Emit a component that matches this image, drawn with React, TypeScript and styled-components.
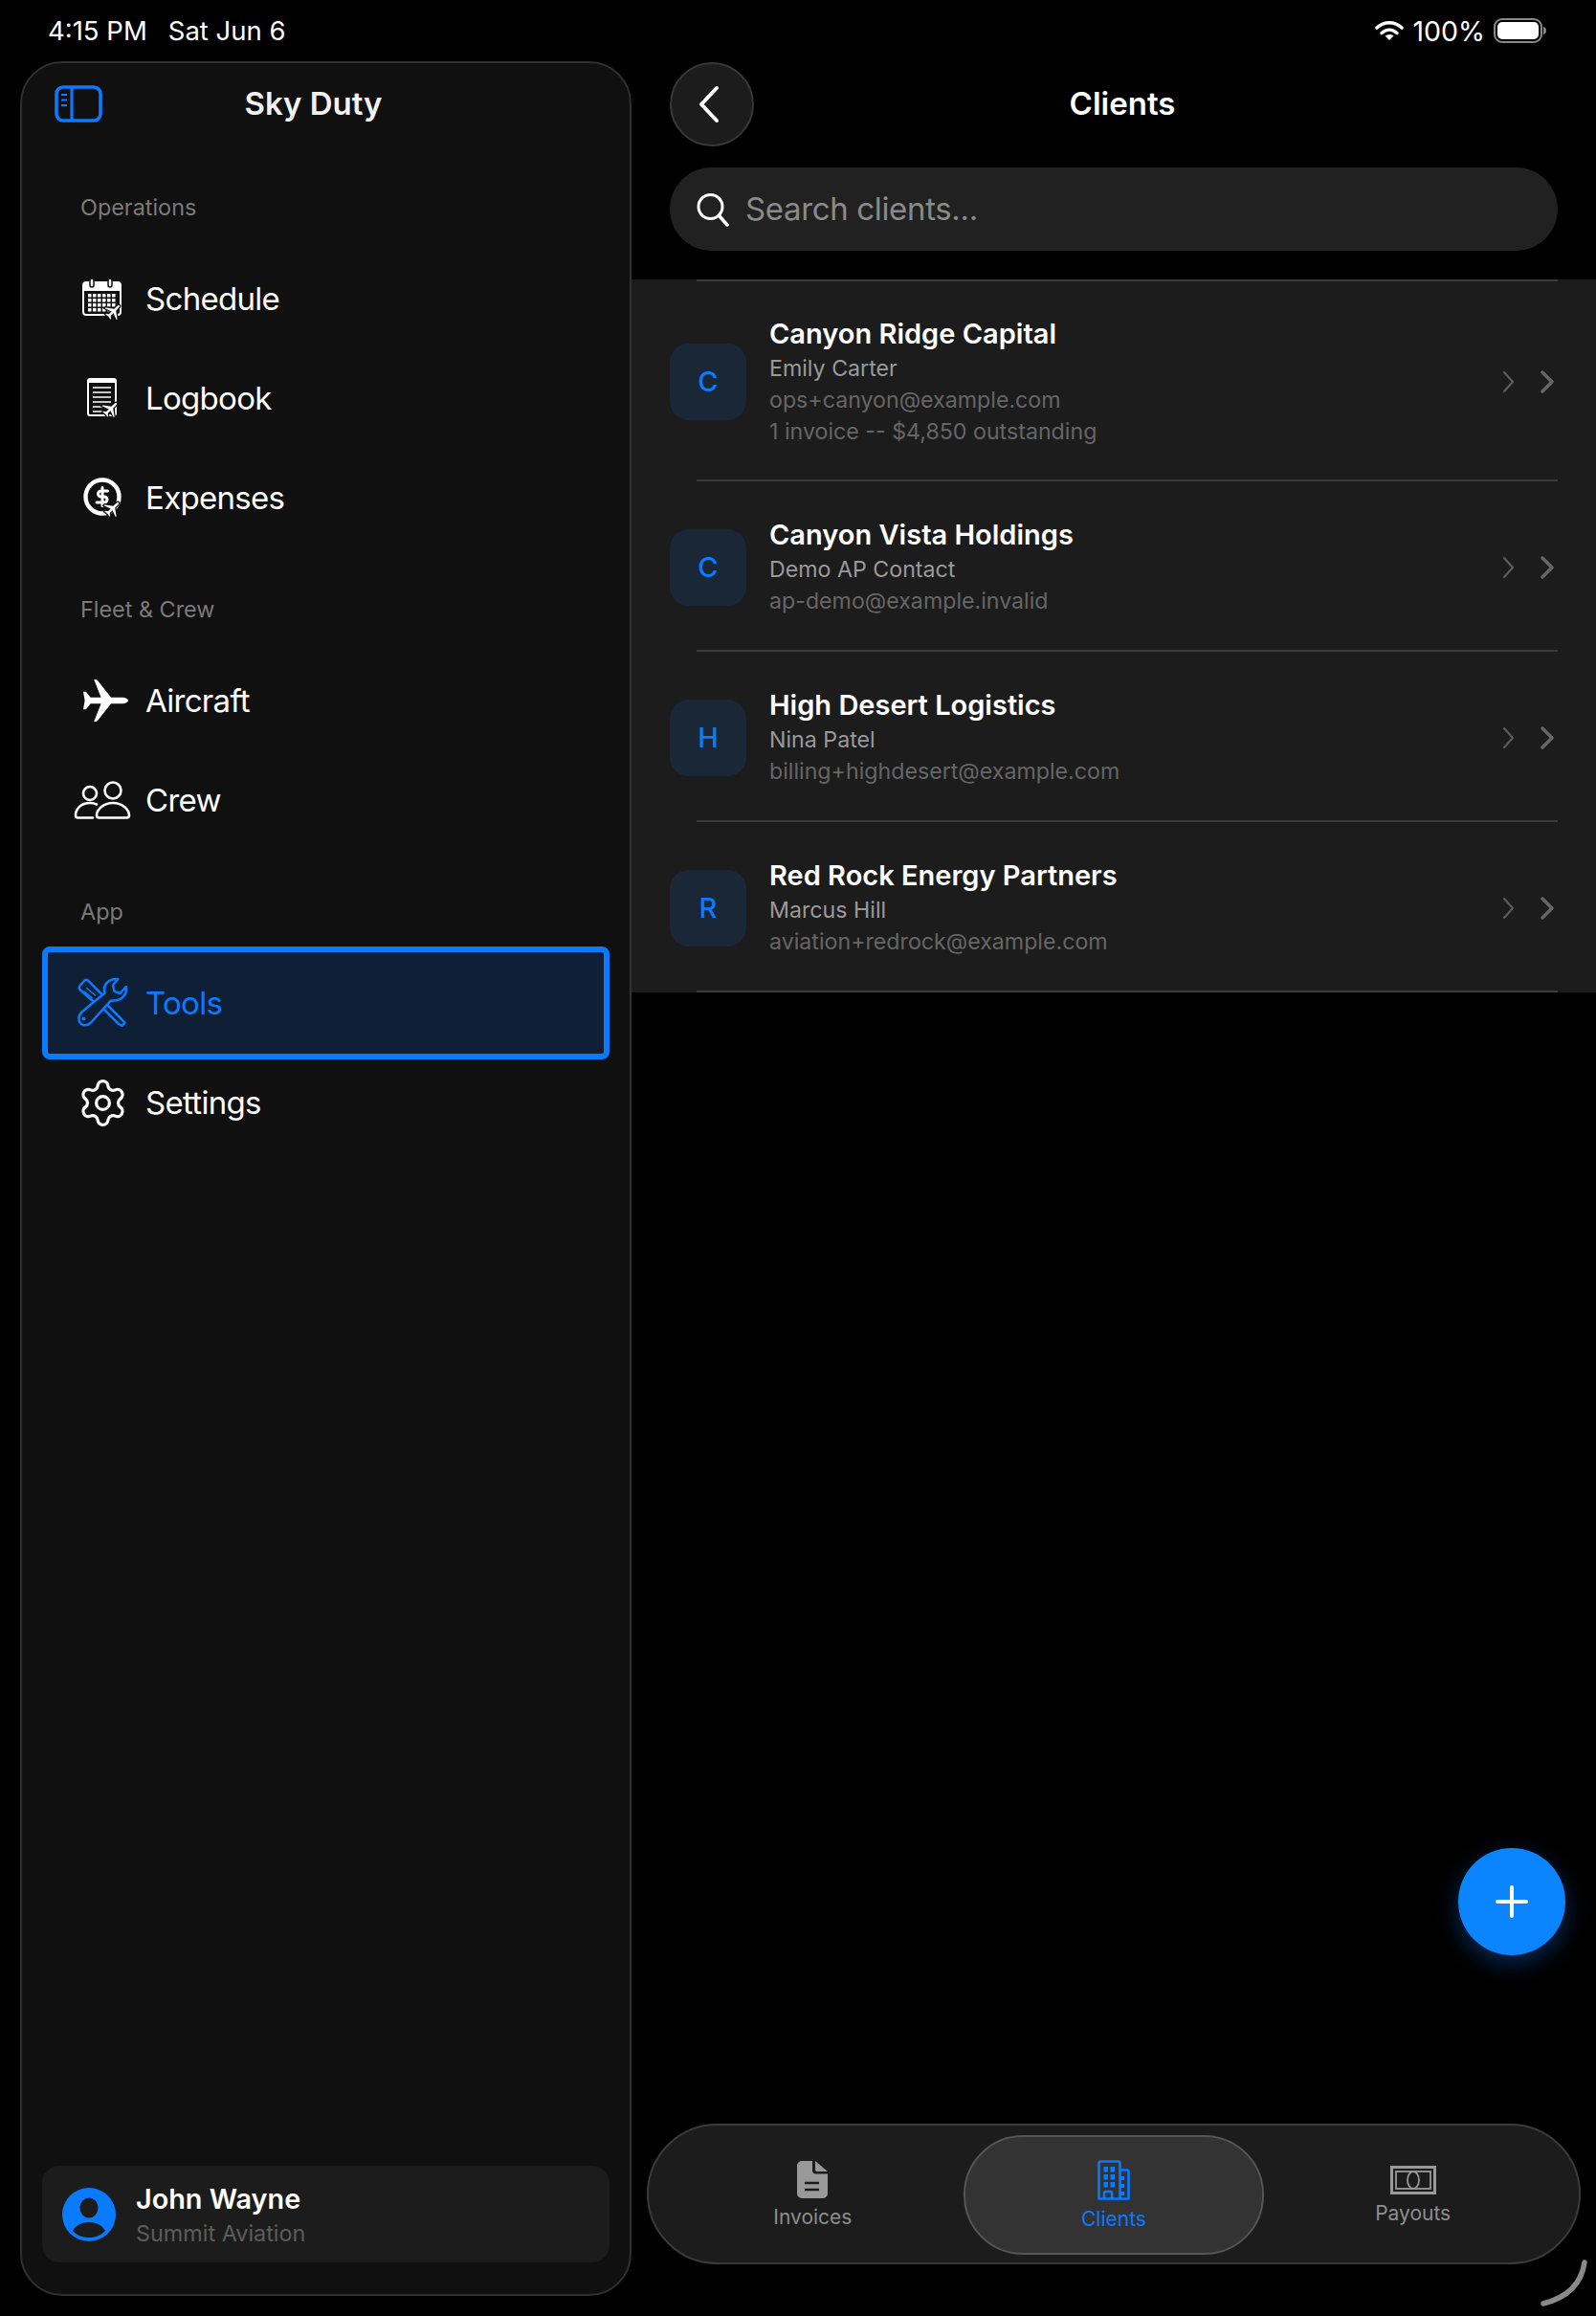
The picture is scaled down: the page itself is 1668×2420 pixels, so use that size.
import React from "react";
import styled, { createGlobalStyle } from "styled-components";
import { Settings } from "lucide-react";

const BLUE = "#0a7aff";

const PLANE =
  "M23.5 12c0-1-1.5-1.8-3.5-1.8h-5.5L7.5.5C7.300.200 7 0 6.600 0h-1l3.700 10.200H3.800L1.400 7H0l.8 5-.8 5h1.400l2.400-3.200h5.500L5.600 24h1c.4 0 .7-.2.9-.5l7-9.700H20c2 0 3.500-.8 3.500-1.800z";

const clients = [
  {
    letter: "C",
    name: "Canyon Ridge Capital",
    contact: "Emily Carter",
    email: "ops+canyon@example.com",
    note: "1 invoice -- $4,850 outstanding",
  },
  {
    letter: "C",
    name: "Canyon Vista Holdings",
    contact: "Demo AP Contact",
    email: "ap-demo@example.invalid",
  },
  {
    letter: "H",
    name: "High Desert Logistics",
    contact: "Nina Patel",
    email: "billing+highdesert@example.com",
  },
  {
    letter: "R",
    name: "Red Rock Energy Partners",
    contact: "Marcus Hill",
    email: "aviation+redrock@example.com",
  },
];

const MiniPlane: React.FC<{ x: number; y: number }> = ({ x, y }) => (
  <g transform={`translate(${x} ${y}) rotate(-45) scale(0.72) translate(-12 -12)`}>
    <path d={PLANE} fill="#fff" stroke="#111" strokeWidth="3.500" paintOrder="stroke" />
  </g>
);

const ScheduleIcon = () => (
  <svg width="42" height="44" viewBox="0 0 42 44">
    <path d="M4 5h33a3 3 0 0 1 3 3v28a3 3 0 0 1-3 3H4a3 3 0 0 1-3-3V8a3 3 0 0 1 3-3z" fill="none" stroke="#fff" strokeWidth="2" />
    <path d="M4 5h33a3 3 0 0 1 3 3v6H1V8a3 3 0 0 1 3-3z" fill="#fff" />
    <rect x="8" y="1" width="4" height="9" rx="2" fill="#fff" stroke="#111" strokeWidth="1.500" />
    <rect x="27" y="1" width="4" height="9" rx="2" fill="#fff" stroke="#111" strokeWidth="1.500" />
    {[0, 1, 2, 3].map((r) =>
      [0, 1, 2, 3, 4, 5].map((c) => (
        <rect key={`${r}-${c}`} x={6 + c * 5} y={17 + r * 5} width="3.500" height="3.500" fill="#fff" />
      ))
    )}
    <MiniPlane x={33} y={35} />
  </svg>
);

const LogbookIcon = () => (
  <svg width="34" height="42" viewBox="-1 0 34 42">
    <rect x="1" y="1" width="29" height="38" rx="2" fill="none" stroke="#fff" strokeWidth="2" />
    <rect x="1" y="1" width="29" height="4" fill="#fff" />
    <path d="M6 10h19M6 15h19M6 20h19M6 25h19M6 30h12M6 35h10" stroke="#fff" strokeWidth="1.600" />
    <MiniPlane x={25} y={32} />
  </svg>
);

const ExpensesIcon = () => (
  <svg width="42" height="42" viewBox="-1 0 42 42">
    <circle cx="20" cy="20" r="17.500" fill="none" stroke="#fff" strokeWidth="4.400" />
    <path
      d="M25.500 14h-7a3 3 0 1 0 0 6h3.500a3 3 0 1 1 0 6H14M20 10.500v19"
      fill="none"
      stroke="#fff"
      strokeWidth="3"
      strokeLinecap="round"
    />
    <MiniPlane x={31} y={32} />
  </svg>
);

const AircraftIcon = () => (
  <PlaneSvg width="48" height="44" viewBox="0 0 24 24" preserveAspectRatio="none">
    <path d={PLANE} fill="#fff" />
  </PlaneSvg>
);

const CrewIcon = () => (
  <svg width="60" height="40" viewBox="0 0 60 40" fill="none" stroke="#fff" strokeWidth="2.600" strokeLinecap="round">
    <circle cx="17" cy="13" r="7" />
    <circle cx="41" cy="10" r="8.500" />
    <path d="M24 24.500c-2-1-4-1.500-7-1.500C8 23 2 29 2 36c0 1.500.8 2.500 2.500 2.500H20" />
    <path d="M41 23c-10 0-17 7-17 13 0 1.500 1 2.500 2.500 2.500h29c1.500 0 2.500-1 2.500-2.500 0-6-7-13-17-13z" />
  </svg>
);

const ToolsIcon = () => (
  <svg width="54" height="54" viewBox="-1 0 54 54" fill="none" stroke={BLUE} strokeWidth="2.500" strokeLinejoin="round" strokeLinecap="round">
    <path d="M2.500 9L7 4c1.300-1.500 3-1.500 4.300-.2L28 20.500 20 28.500 2.800 13.300c-1.500-1.300-1.500-3-.3-4.300z" />
    <path d="M9.500 11.500l9 7.500M7 15l8 6.500" strokeWidth="1.500" />
    <path d="M31 29l16 16M27 33l16 16M47 45l2.500 2.800-3 3L43 49" />
    <path
      d="M42.300 2L37 8.500l1.500 6.300 6 2.200 6.200-7c1.800 8-4.700 15-13.700 14.500l-2.300.2L14 47.500c-4.500 4.500-12.500 3.500-12.700-4.500 0-3 1.700-5 3.700-7l23.500-19.500C26 8 33 1 42.300 2z"
      fill="#0f2036"
    />
    <circle cx="6.500" cy="43.500" r="2" fill={BLUE} stroke="none" />
  </svg>
);

const SearchIcon = () => (
  <svg width="34" height="36" viewBox="0 0 34 36" fill="none" stroke="#fff" strokeWidth="3" strokeLinecap="round">
    <circle cx="14.500" cy="15" r="12.500" />
    <path d="M24 25l8 9" strokeWidth="3.500" />
  </svg>
);

const Chevron: React.FC<{ $thick?: boolean }> = ({ $thick }) =>
  $thick ? (
    <svg width="16" height="24" viewBox="0 0 16 24" fill="none" stroke="#666" strokeWidth="3.500" strokeLinecap="round" strokeLinejoin="round">
      <path d="M3 2l10 10L3 22" />
    </svg>
  ) : (
    <svg width="13" height="24" viewBox="0 0 13 24" fill="none" stroke="#5c5c5c" strokeWidth="2.200" strokeLinecap="round" strokeLinejoin="round">
      <path d="M2 2l9 10-9 10" />
    </svg>
  );

const InvoiceIcon = () => (
  <svg width="32" height="39" viewBox="0 0 32 39">
    <path d="M5 0h11v10c0 2 1.500 3.500 3.500 3.500H32V34a5 5 0 0 1-5 5H5a5 5 0 0 1-5-5V5a5 5 0 0 1 5-5z" fill="#999" />
    <path d="M19 0l13 11H21c-1.300 0-2-.8-2-2z" fill="#999" />
    <path d="M8 23h15M8 30h15" stroke="#1c1c1c" strokeWidth="2.600" />
  </svg>
);

const BuildingIcon = () => (
  <svg width="34" height="42" viewBox="0 0 34 42">
    <path d="M23.500 40V3a1.500 1.500 0 0 0-1.500-1.500H3A1.500 1.500 0 0 0 1.500 3v37.500h31V12a1.500 1.500 0 0 0-1.500-1.500h-7.500" fill="none" stroke={BLUE} strokeWidth="2.600" strokeLinejoin="round" />
    {[0, 1, 2].map((r) =>
      [0, 1].map((c) => <rect key={`${r}-${c}`} x={6.500 + c * 7} y={7 + r * 8} width="4.500" height="5.500" fill={BLUE} />)
    )}
    <path d="M7 40v-6a1 1 0 0 1 1-1h6a1 1 0 0 1 1 1v6" fill="none" stroke={BLUE} strokeWidth="2.400" />
    <path d="M24 17h4v4h-4zM24 25h4v4h-4zM24 33h4v4h-4z" fill={BLUE} />
  </svg>
);

const PayoutIcon = () => (
  <svg width="48" height="30" viewBox="0 0 48 30" fill="none" stroke="#999">
    <rect x="1.500" y="1.500" width="45" height="27" strokeWidth="3" />
    <rect x="6" y="6" width="36" height="18" strokeWidth="1.800" />
    <ellipse cx="24" cy="15" rx="6" ry="9" strokeWidth="1.800" />
  </svg>
);

const GlobalStyle = createGlobalStyle`
  html, body {
    margin: 0;
    background: #000;
  }
  * {
    box-sizing: border-box;
  }
`;

const App = () => (
  <>
    <GlobalStyle />
    <Page>
      <StatusBar>
        <StatusLeft>
          <span>4:15 PM</span>
          <span>Sat Jun 6</span>
        </StatusLeft>
        <StatusRight>
          <svg width="30" height="22" viewBox="0 0 30 22" fill="none" stroke="#fff" strokeLinecap="round">
            <path d="M2 8c7.500-7 18.500-7 26 0" strokeWidth="3.600" />
            <path d="M7 13.500c5-4.500 11-4.500 16 0" strokeWidth="3.400" />
            <path d="M15 21l-4.500-4.500c2.800-2 6.200-2 9 0z" fill="#fff" stroke="none" />
          </svg>
          <span>100%</span>
          <svg width="55" height="26" viewBox="0 0 55 26">
            <rect x="1" y="1" width="49" height="24" rx="8" fill="none" stroke="#888" strokeWidth="2" />
            <rect x="4" y="4" width="43" height="18" rx="5" fill="#fff" />
            <path d="M52 9c2 .5 3 2 3 4s-1 3.500-3 4z" fill="#888" />
          </svg>
        </StatusRight>
      </StatusBar>
      <Body>
        <Sidebar>
          <SidebarHeader>
            <PanelButton>
              <svg width="50" height="39" viewBox="0 0 50 39" fill="none" stroke={BLUE}>
                <rect x="2" y="2" width="46" height="35" rx="7" strokeWidth="3.600" />
                <path d="M18 2v35" strokeWidth="3.200" />
                <path d="M7 10h6M7 15.500h6M7 21h6" strokeWidth="2.200" />
              </svg>
            </PanelButton>
            <SidebarTitle>Sky Duty</SidebarTitle>
          </SidebarHeader>
          <SectionLabel>Operations</SectionLabel>
          <NavItem>
            <NavIcon><ScheduleIcon /></NavIcon>
            <span>Schedule</span>
          </NavItem>
          <NavItem>
            <NavIcon><LogbookIcon /></NavIcon>
            <span>Logbook</span>
          </NavItem>
          <NavItem>
            <NavIcon><ExpensesIcon /></NavIcon>
            <span>Expenses</span>
          </NavItem>
          <SectionLabel $spaced>Fleet &amp; Crew</SectionLabel>
          <NavItem>
            <NavIcon><AircraftIcon /></NavIcon>
            <span>Aircraft</span>
          </NavItem>
          <NavItem>
            <NavIcon><CrewIcon /></NavIcon>
            <span>Crew</span>
          </NavItem>
          <SectionLabel $spaced>App</SectionLabel>
          <NavItem $active>
            <NavIcon><ToolsIcon /></NavIcon>
            <span>Tools</span>
          </NavItem>
          <NavItem>
            <NavIcon><Settings size={55} strokeWidth={1.400} color="#fff" /></NavIcon>
            <span>Settings</span>
          </NavItem>
          <UserCard>
            <svg width="56" height="56" viewBox="0 0 56 56">
              <circle cx="28" cy="28" r="28" fill={BLUE} />
              <ellipse cx="28" cy="21" rx="9.500" ry="10.500" fill="#1c1c1c" />
              <path d="M11 45c3-6 10-9 17-9s14 3 17 9c-4 4.500-10 7-17 7s-13-2.500-17-7z" fill="#1c1c1c" />
            </svg>
            <UserText>
              <UserName>John Wayne</UserName>
              <UserOrg>Summit Aviation</UserOrg>
            </UserText>
          </UserCard>
        </Sidebar>
        <Main>
          <TopBar>
            <BackButton>
              <svg width="26" height="40" viewBox="0 0 26 40" fill="none" stroke="#fff" strokeWidth="4" strokeLinecap="round" strokeLinejoin="round">
                <path d="M21 3L5 20l16 17" />
              </svg>
            </BackButton>
            <PageTitle>Clients</PageTitle>
          </TopBar>
          <SearchBar>
            <SearchIcon />
            <SearchText>Search clients...</SearchText>
          </SearchBar>
          <ClientList>
            <Separator />
            {clients.map((c) => (
              <React.Fragment key={c.email}>
                <ClientRow $hasNote={!!c.note}>
                  <Avatar>{c.letter}</Avatar>
                  <ClientText>
                    <ClientName>{c.name}</ClientName>
                    <ClientContact>{c.contact}</ClientContact>
                    <ClientMuted>{c.email}</ClientMuted>
                    {c.note && <ClientMuted>{c.note}</ClientMuted>}
                  </ClientText>
                  <Chevrons>
                    <Chevron />
                    <Chevron $thick />
                  </Chevrons>
                </ClientRow>
                <Separator />
              </React.Fragment>
            ))}
          </ClientList>
          <Fab>
            <svg width="36" height="36" viewBox="0 0 36 36" stroke="#fff" strokeWidth="4" strokeLinecap="round">
              <path d="M18 3v30M3 18h30" />
            </svg>
          </Fab>
          <TabBar>
            <Tab>
              <InvoiceIcon />
              <TabLabel>Invoices</TabLabel>
            </Tab>
            <Tab $active>
              <BuildingIcon />
              <TabLabel $active>Clients</TabLabel>
            </Tab>
            <Tab>
              <PayoutIcon />
              <TabLabel>Payouts</TabLabel>
            </Tab>
          </TabBar>
        </Main>
      </Body>
      <CornerGrip width="50" height="50" viewBox="0 0 50 50" fill="none" stroke="#8a8a8a" strokeWidth="5.500" strokeLinecap="round">
        <path d="M47 3c-3 20-15 36-43 43" />
      </CornerGrip>
    </Page>
  </>
);

const Page = styled.div`
  position: relative;
  display: flex;
  flex-direction: column;
  width: 1668px;
  height: 2420px;
  overflow: hidden;
  background: #000;
  color: #fff;
  font-family: Inter, "Liberation Sans", sans-serif;
`;

const StatusBar = styled.div`
  display: flex;
  justify-content: space-between;
  align-items: center;
  height: 64px;
  padding: 0 52px 0 50px;
  font-size: 27.5px;
`;

const StatusLeft = styled.div`
  display: flex;
  gap: 22px;
`;

const StatusRight = styled.div`
  display: flex;
  align-items: center;
  gap: 9px;
  font-size: 28.5px;
`;

const Body = styled.div`
  display: flex;
  flex: 1;
  min-height: 0;
`;

const Sidebar = styled.aside`
  display: flex;
  flex-direction: column;
  width: 639px;
  margin: 0 0 21px 21px;
  padding: 0 21px 33px;
  background: #101011;
  border: 2px solid #303030;
  border-radius: 44px;
`;

const SidebarHeader = styled.div`
  position: relative;
  display: flex;
  justify-content: center;
  align-items: center;
  height: 86px;
  margin-bottom: 50px;
  padding: 0 26px 2px 0;
`;

const PanelButton = styled.div`
  position: absolute;
  left: 13px;
  top: 23px;
  display: flex;
`;

const SidebarTitle = styled.div`
  font-size: 33px;
  font-weight: 600;
  color: #f2f2f2;
`;

const SectionLabel = styled.div<{ $spaced?: boolean }>`
  margin: ${(p) => (p.$spaced ? "50px" : "0")} 0 28px 40px;
  font-size: 23.4px;
  line-height: 30px;
  color: #7a7a7a;
`;

const NavItem = styled.div<{ $active?: boolean }>`
  display: flex;
  align-items: center;
  gap: 13px;
  height: ${(p) => (p.$active ? "118px" : "104px")};
  margin: ${(p) => (p.$active ? "-7px 0" : "0")};
  padding-left: 25px;
  font-size: 33px;
  letter-spacing: -0.7px;
  border: 6px solid ${(p) => (p.$active ? BLUE : "transparent")};
  border-radius: 8px;
  background: ${(p) => (p.$active ? "#0f2036" : "transparent")};
  color: ${(p) => (p.$active ? BLUE : "#fff")};
`;

const NavIcon = styled.div`
  display: flex;
  justify-content: center;
  align-items: center;
  width: 64px;
`;

const PlaneSvg = styled.svg`
  margin-left: 7px;
`;

const UserCard = styled.div`
  display: flex;
  align-items: center;
  gap: 21px;
  height: 101px;
  margin-top: auto;
  padding-left: 21px;
  background: #1c1c1c;
  border-radius: 18px;
`;

const UserText = styled.div`
  padding-top: 2px;
`;

const UserName = styled.div`
  font-size: 28.8px;
  font-weight: 600;
  line-height: 37px;
`;

const UserOrg = styled.div`
  font-size: 23.4px;
  line-height: 35px;
  color: #5c5c5c;
`;

const Main = styled.main`
  position: relative;
  display: flex;
  flex-direction: column;
  flex: 1;
  min-width: 0;
`;

const TopBar = styled.header`
  display: grid;
  grid-template-columns: 88px 1fr 70px;
  align-items: center;
  margin: 1px 40px 0;
`;

const BackButton = styled.div`
  display: flex;
  justify-content: center;
  align-items: center;
  width: 88px;
  height: 88px;
  padding-right: 6px;
  background: #1c1c1c;
  border: 2px solid #383838;
  border-radius: 50%;
`;

const PageTitle = styled.div`
  padding-bottom: 2px;
  text-align: center;
  font-size: 33px;
  font-weight: 600;
`;

const SearchBar = styled.div`
  display: flex;
  align-items: center;
  gap: 17px;
  height: 87px;
  margin: 22px 40px 30px;
  padding-left: 28px;
  background: #212121;
  border-radius: 44px;
`;

const SearchText = styled.div`
  padding-bottom: 2px;
  font-size: 33px;
  letter-spacing: -0.35px;
  color: #8a8a8a;
`;

const ClientList = styled.section`
  background: #1c1c1c;
`;

const Separator = styled.div`
  height: 2px;
  margin: 0 40px 0 68px;
  background: #3a3a3a;
`;

const ClientRow = styled.div<{ $hasNote?: boolean }>`
  display: flex;
  align-items: center;
  padding: ${(p) => (p.$hasNote ? "36px 40px 33px" : "37px 40px 34px")};
`;

const Avatar = styled.div`
  display: flex;
  justify-content: center;
  align-items: center;
  flex-shrink: 0;
  width: 80px;
  height: 80px;
  margin-right: 24px;
  padding-bottom: 1px;
  background: #1a2737;
  border-radius: 20px;
  font-size: 29px;
  font-weight: 500;
  color: ${BLUE};
`;

const ClientText = styled.div`
  flex: 1;
`;

const ClientName = styled.div`
  font-size: 29px;
  font-weight: 600;
  line-height: 38px;
`;

const ClientContact = styled.div`
  font-size: 23.2px;
  line-height: 34px;
  color: #9a9a9a;
`;

const ClientMuted = styled.div`
  font-size: 23.2px;
  line-height: 33px;
  color: #666;
`;

const Chevrons = styled.div`
  display: flex;
  align-items: center;
  gap: 26px;
  padding-right: 3px;
`;

const Fab = styled.div`
  position: absolute;
  right: 32px;
  bottom: 377px;
  display: flex;
  justify-content: center;
  align-items: center;
  width: 112px;
  height: 112px;
  background: #0a84ff;
  border-radius: 50%;
  box-shadow: 0 8px 24px rgba(10, 122, 255, 0.35);
`;

const TabBar = styled.nav`
  display: grid;
  grid-template-columns: repeat(3, 1fr);
  align-items: center;
  height: 147px;
  margin: auto 16px 54px;
  padding: 1px 17px 0;
  background: #1c1c1c;
  border: 2px solid #3a3a3a;
  border-radius: 74px;
`;

const Tab = styled.div<{ $active?: boolean }>`
  display: flex;
  flex-direction: column;
  justify-content: center;
  align-items: center;
  gap: 7px;
  height: 125px;
  margin: 0 ${(p) => (p.$active ? "-1px" : "0")};
  padding-top: 2px;
  background: ${(p) => (p.$active ? "#333" : "transparent")};
  border: 2px solid ${(p) => (p.$active ? "#555" : "transparent")};
  border-radius: 62px;

  &:first-child {
    padding-right: 4px;
  }
`;

const TabLabel = styled.div<{ $active?: boolean }>`
  font-size: 21px;
  line-height: 26px;
  color: ${(p) => (p.$active ? BLUE : "#8e8e8e")};
`;

const CornerGrip = styled.svg`
  position: absolute;
  right: 9px;
  bottom: 9px;
`;

export default App;
